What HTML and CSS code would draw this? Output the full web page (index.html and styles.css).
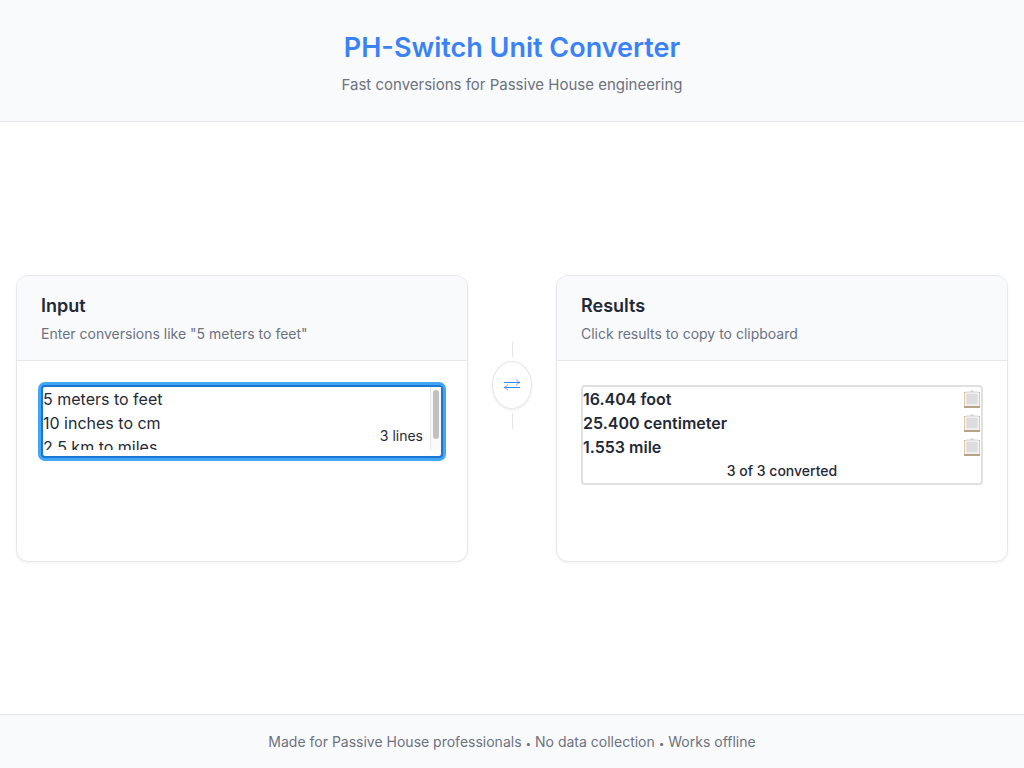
FILE: index.html
```html
<!DOCTYPE html>
<html lang="en">
<head>
<meta charset="utf-8">
<meta name="viewport" content="width=device-width, initial-scale=1">
<title>PH-Switch Unit Converter</title>
<link rel="stylesheet" href="styles.css">
</head>
<body>
<svg class="symbols" aria-hidden="true">
  <symbol id="clipboard" viewBox="0 0 16 20">
    <rect x="0.5" y="3.500" width="15" height="14.500" fill="#fcf3e6" stroke="#e4cca8"/>
    <path d="M0 18h16" stroke="#b9a288" stroke-width="2"/>
    <path d="M0 3.500h2.500M13.500 3.500h2.500" stroke="#d8b48a"/>
    <rect x="1.500" y="3" width="13" height="14" fill="#efeff0"/>
    <rect x="2.500" y="5" width="11" height="10" fill="#dcdcdd"/>
    <path d="M2 3.500v-1h4l1-1h2l1 1h4v1z" fill="#d0d4d9"/>
  </symbol>
</svg>
<header class="site-header">
  <h1 class="site-title">PH-Switch Unit Converter</h1>
  <p class="site-tagline">Fast conversions for Passive House engineering</p>
</header>
<main class="converter">
  <section class="panel">
    <div class="panel-header">
      <h2 class="panel-title"><label for="input">Input</label></h2>
      <p class="panel-hint">Enter conversions like "5 meters to feet"</p>
    </div>
    <div class="panel-body">
      <div class="editor">
        <textarea class="editor-text" id="input" spellcheck="false">5 meters to feet
10 inches to cm
2.5 km to miles</textarea>
        <span class="scroll-track" aria-hidden="true"><span class="scroll-thumb"></span></span>
        <span class="line-count">3 lines</span>
      </div>
    </div>
  </section>
  <div class="divider">
    <span class="divider-line"></span>
    <span class="divider-icon">
      <svg width="18" height="14" viewBox="0 0 18 14" fill="none" stroke="#3b82f6" aria-hidden="true">
        <path d="M1 4.500h16M1 9.500h16"/>
        <path d="M13.500 1.500c.5 1.500 1.500 2.500 3.500 3c-2 .5-3 1.500-3.500 3M4.500 6.500c-.5 1.500-1.500 2.500-3.500 3c2 .5 3 1.500 3.500 3" stroke-width=".8"/>
      </svg>
    </span>
    <span class="divider-line"></span>
  </div>
  <section class="panel">
    <div class="panel-header">
      <h2 class="panel-title">Results</h2>
      <p class="panel-hint">Click results to copy to clipboard</p>
    </div>
    <div class="panel-body">
      <div class="results">
        <button class="result" type="button">16.404 foot<svg class="copy-icon" aria-hidden="true"><use href="#clipboard"/></svg></button>
        <button class="result" type="button">25.400 centimeter<svg class="copy-icon" aria-hidden="true"><use href="#clipboard"/></svg></button>
        <button class="result" type="button">1.553 mile<svg class="copy-icon" aria-hidden="true"><use href="#clipboard"/></svg></button>
        <p class="summary">3 of 3 converted</p>
      </div>
    </div>
  </section>
</main>
<footer class="site-footer">Made for Passive House professionals <span class="dot">•</span> No data collection <span class="dot">•</span> Works offline</footer>
</body>
</html>
```
FILE: styles.css
```css
* {
  box-sizing: border-box;
}

body {
  display: flex;
  flex-direction: column;
  min-height: 100vh;
  margin: 0;
  background: #fff;
  color: #1f2937;
  font-family: Inter, "Liberation Sans", sans-serif;
  font-size: 16px;
  line-height: 24px;
}

h1, h2, p {
  margin: 0;
}

.symbols {
  position: absolute;
  width: 0;
  height: 0;
}

.site-header {
  padding: 24px 24px 23px;
  border-bottom: 1px solid #e5e7eb;
  background: #f9fafc;
  text-align: center;
}

.site-title {
  color: #3b82f6;
  font-size: 27px;
  font-weight: 600;
  line-height: 48px;
}

.site-tagline {
  color: #6b7280;
  font-size: 15px;
  line-height: 26px;
}

.converter {
  display: grid;
  flex: 1;
  grid-template-columns: 1fr 40px 1fr;
  gap: 24px;
  align-content: center;
  padding: 16px;
}

.panel {
  overflow: hidden;
  border: 1px solid #e5e7eb;
  border-radius: 12px;
  background: #fff;
  box-shadow: 0 1px 3px rgba(0, 0, 0, 0.06);
}

.panel-header {
  padding: 16px 24px;
  border-bottom: 1px solid #e5e7eb;
  background: #f9fafc;
}

.panel-title {
  margin-bottom: 4px;
  font-size: 18px;
  font-weight: 600;
  line-height: 28px;
}

.panel-hint {
  color: #6b7280;
  font-size: 14px;
  line-height: 20px;
}

.panel-body {
  min-height: 200px;
  padding: 24px;
}

.editor {
  position: relative;
  padding-bottom: 6px;
  border: 2px solid #1976d2;
  border-radius: 4px;
  background: #fff;
  box-shadow: 0 0 0 3px #42a5f5;
}

.editor-text {
  display: block;
  width: 100%;
  height: 63px;
  padding: 0 11px 0 0;
  border: 0;
  outline: 0;
  overflow-y: scroll;
  scrollbar-width: none;
  resize: none;
  background: transparent;
  color: inherit;
  font: inherit;
}

.scroll-track {
  position: absolute;
  top: 0;
  right: 0;
  bottom: 6px;
  width: 11px;
  padding: 3px 2px;
  border-left: 1px solid #e8e8e8;
  background: #fafafa;
}

.scroll-thumb {
  display: block;
  height: 49px;
  border-radius: 3px;
  background: #c1c1c1;
}

.line-count {
  position: absolute;
  right: 18px;
  bottom: 8px;
  font-size: 14px;
}

.divider {
  display: flex;
  flex-direction: column;
  align-items: center;
  gap: 4px;
  padding-top: 66px;
}

.divider-line {
  width: 1px;
  height: 16px;
  background: #e5e7eb;
}

.divider-icon {
  display: flex;
  align-items: center;
  justify-content: center;
  width: 40px;
  height: 48px;
  border: 1px solid #e5e7eb;
  border-radius: 50%;
  box-shadow: 0 1px 3px rgba(0, 0, 0, 0.08);
}

.results {
  border: 2px solid #e0e0e0;
  border-radius: 4px;
}

.result {
  display: flex;
  align-items: center;
  justify-content: space-between;
  width: 100%;
  padding: 0 1px 0 0;
  border: 0;
  background: none;
  color: inherit;
  font: inherit;
  font-weight: 600;
  cursor: pointer;
}

.copy-icon {
  width: 16px;
  height: 20px;
}

.summary {
  font-size: 14px;
  font-weight: 500;
  text-align: center;
}

.site-footer {
  padding: 16px;
  border-top: 1px solid #e5e7eb;
  background: #f9fafc;
  color: #6b7280;
  font-size: 14px;
  line-height: 21px;
  text-align: center;
}

.dot {
  font-size: 10px;
  line-height: 1;
}
```
